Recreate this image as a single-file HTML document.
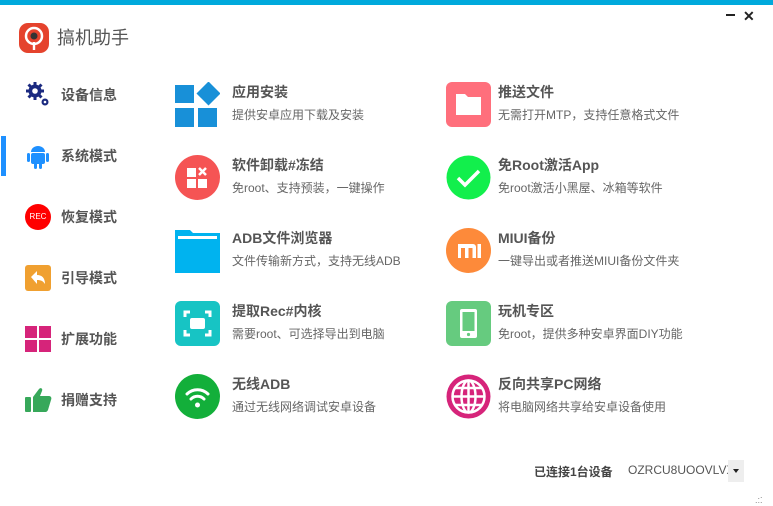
<!DOCTYPE html>
<html><head><meta charset="utf-8"><style>
*{margin:0;padding:0;box-sizing:border-box}
body{width:773px;height:506px;background:#fff;position:relative;overflow:hidden;font-family:"Liberation Sans","Noto Sans CJK SC",sans-serif;color:#555}
.top{position:absolute;left:0;top:0;width:773px;height:5px;background:#00a9dc}
.abs{position:absolute}
.nav{position:absolute;left:61px;font-size:14px;font-weight:bold;color:#555;line-height:20px}
.t{position:absolute;font-size:14px;font-weight:bold;color:#555;line-height:18px;white-space:nowrap}
.d{position:absolute;font-size:12px;color:#666;line-height:16px;white-space:nowrap}
</style></head><body>
<div class="top"></div>
<div class="abs" style="left:726px;top:14px;width:9px;height:2px;background:#222"></div>
<div class="abs" style="left:743px;top:8px;font-size:14px;color:#222;font-weight:bold">✕</div>

<!-- logo -->
<svg class="abs" style="left:19px;top:23px" width="30" height="30" viewBox="0 0 30 30"><rect width="30" height="30" rx="9" fill="#e5432d"/><circle cx="15" cy="13" r="8" fill="none" stroke="#fff" stroke-width="2.5"/><circle cx="15" cy="13" r="3.5" fill="#333"/><rect x="13.8" y="19" width="2.4" height="8" fill="#fff"/></svg>
<div class="abs" style="left:57px;top:27px;font-size:18px;color:#555;line-height:22px">搞机助手</div>

<!-- sidebar -->
<div class="abs" style="left:1px;top:136px;width:5px;height:40px;background:#1e90ff"></div>
<svg class="abs" style="left:25px;top:81px" width="26" height="26" viewBox="0 0 26 26"><circle cx="10" cy="10" r="6.5" fill="#1b2a80"/><g stroke="#1b2a80" stroke-width="3"><line x1="10" y1="1" x2="10" y2="19"/><line x1="1" y1="10" x2="19" y2="10"/><line x1="3.5" y1="3.5" x2="16.5" y2="16.5"/><line x1="16.5" y1="3.5" x2="3.5" y2="16.5"/></g><circle cx="10" cy="10" r="2.8" fill="#fff"/><circle cx="20" cy="21" r="3.5" fill="#1b2a80"/><circle cx="20" cy="21" r="1.3" fill="#fff"/></svg>
<div class="nav" style="top:85px">设备信息</div>
<svg class="abs" style="left:26px;top:143px" width="24" height="26" viewBox="0 0 24 26"><path d="M5 9a7 6 0 0 1 14 0z" fill="#1e90ff"/><rect x="5" y="10" width="14" height="11" rx="2" fill="#1e90ff"/><rect x="1" y="10" width="3" height="9" rx="1.5" fill="#1e90ff"/><rect x="20" y="10" width="3" height="9" rx="1.5" fill="#1e90ff"/><rect x="8" y="20" width="3" height="6" rx="1.5" fill="#1e90ff"/><rect x="13" y="20" width="3" height="6" rx="1.5" fill="#1e90ff"/></svg>
<div class="nav" style="top:146px">系统模式</div>
<div class="abs" style="left:25px;top:204px;width:26px;height:26px;border-radius:50%;background:#f00;color:#fff;font-size:8px;line-height:26px;text-align:center">REC</div>
<div class="nav" style="top:207px">恢复模式</div>
<svg class="abs" style="left:25px;top:265px" width="26" height="26" viewBox="0 0 26 26"><rect width="26" height="26" rx="3" fill="#f0a030"/><path d="M6 12l6-6v4c5 0 8 3 8 9-2-3-4-4-8-4v4z" fill="#fff"/></svg>
<div class="nav" style="top:268px">引导模式</div>
<svg class="abs" style="left:25px;top:326px" width="26" height="26" viewBox="0 0 26 26"><g fill="#d6247a"><rect width="12" height="12"/><rect x="14" width="12" height="12"/><rect y="14" width="12" height="12"/><rect x="14" y="14" width="12" height="12"/></g></svg>
<div class="nav" style="top:329px">扩展功能</div>
<svg class="abs" style="left:25px;top:386px" width="27" height="27" viewBox="0 0 27 27"><rect x="0" y="11" width="6" height="15" rx="1" fill="#37a85a"/><path d="M8 11l6-8c2-2 4 0 3 2l-2 5h9c2 0 3 2 2 4l-3 10c-1 2-2 2-3 2H8z" fill="#37a85a"/></svg>
<div class="nav" style="top:390px">捐赠支持</div>

<!-- left column -->
<svg class="abs" style="left:175px;top:82px" width="45" height="45" viewBox="0 0 45 45"><g fill="#1890d8"><rect x="0" y="3" width="19" height="18"/><rect x="0" y="26" width="19" height="19"/><rect x="23" y="26" width="19" height="19"/><rect x="25" y="3" width="17" height="17" transform="rotate(45 33.5 11.5)"/></g></svg>
<div class="t" style="left:232px;top:83px">应用安装</div><div class="d" style="left:232px;top:107px">提供安卓应用下载及安装</div>

<svg class="abs" style="left:175px;top:155px" width="45" height="45" viewBox="0 0 45 45"><circle cx="22.5" cy="22.5" r="22.5" fill="#f55454"/><g fill="#fff"><rect x="12" y="13" width="9" height="9"/><rect x="12" y="24" width="9" height="9"/><rect x="23" y="24" width="9" height="9"/></g><path d="M24 13l7 7M31 13l-7 7" stroke="#fff" stroke-width="2.5"/></svg>
<div class="t" style="left:232px;top:156px">软件卸载#冻结</div><div class="d" style="left:232px;top:180px">免root、支持预装，一键操作</div>

<svg class="abs" style="left:175px;top:228px" width="45" height="45" viewBox="0 0 45 45"><path d="M0 2h15l3 3h27v40H0z" fill="#00b3ef"/><rect x="3" y="8" width="39" height="3" fill="#fff"/></svg>
<div class="t" style="left:232px;top:229px">ADB文件浏览器</div><div class="d" style="left:232px;top:253px">文件传输新方式，支持无线ADB</div>

<svg class="abs" style="left:175px;top:301px" width="45" height="45" viewBox="0 0 45 45"><rect width="45" height="45" rx="6" fill="#17c4c4"/><g stroke="#fff" stroke-width="3" fill="none"><path d="M10 16v-5h5M30 11h5v5M35 29v5h-5M15 34h-5v-5"/></g><rect x="15" y="17" width="15" height="11" rx="2" fill="#fff"/></svg>
<div class="t" style="left:232px;top:302px">提取Rec#内核</div><div class="d" style="left:232px;top:326px">需要root、可选择导出到电脑</div>

<svg class="abs" style="left:175px;top:374px" width="45" height="45" viewBox="0 0 45 45"><circle cx="22.5" cy="22.5" r="22.5" fill="#13af3a"/><g stroke="#fff" stroke-width="3" fill="none" stroke-linecap="round"><path d="M12 20a15 15 0 0 1 21 0"/><path d="M16 25a9 9 0 0 1 13 0"/></g><circle cx="22.5" cy="31" r="2.5" fill="#fff"/></svg>
<div class="t" style="left:232px;top:375px">无线ADB</div><div class="d" style="left:232px;top:399px">通过无线网络调试安卓设备</div>

<!-- right column -->
<svg class="abs" style="left:446px;top:82px" width="45" height="45" viewBox="0 0 45 45"><rect width="45" height="45" rx="6" fill="#ff6f7c"/><path d="M10 12h9l3 3h13v18H10z" fill="#fff"/></svg>
<div class="t" style="left:498px;top:83px">推送文件</div><div class="d" style="left:498px;top:107px">无需打开MTP，支持任意格式文件</div>

<svg class="abs" style="left:446px;top:155px" width="45" height="45" viewBox="0 0 45 45"><circle cx="22.5" cy="22.5" r="22" fill="#12ef4c"/><path d="M12 23l7 7 14-14" stroke="#fff" stroke-width="3.5" fill="none"/></svg>
<div class="t" style="left:498px;top:156px">免Root激活App</div><div class="d" style="left:498px;top:180px">免root激活小黑屋、冰箱等软件</div>

<svg class="abs" style="left:446px;top:228px" width="45" height="45" viewBox="0 0 45 45"><circle cx="22.5" cy="22.5" r="22.5" fill="#fd8a3a"/><path d="M12 16h15a3 3 0 0 1 3 3v11h-3.5V20h-4v10h-3.5V20h-4v10H12z M31.5 16H35v14h-3.5z" fill="#fff"/></svg>
<div class="t" style="left:498px;top:229px">MIUI备份</div><div class="d" style="left:498px;top:253px">一键导出或者推送MIUI备份文件夹</div>

<svg class="abs" style="left:446px;top:301px" width="45" height="45" viewBox="0 0 45 45"><rect width="45" height="45" rx="6" fill="#66cb7f"/><rect x="14" y="8" width="17" height="29" rx="2" fill="#fff"/><rect x="16.5" y="11" width="12" height="19" fill="#66cb7f"/><circle cx="22.5" cy="33.5" r="1.6" fill="#66cb7f"/></svg>
<div class="t" style="left:498px;top:302px">玩机专区</div><div class="d" style="left:498px;top:326px">免root，提供多种安卓界面DIY功能</div>

<svg class="abs" style="left:446px;top:374px" width="45" height="45" viewBox="0 0 45 45"><circle cx="22.5" cy="22.5" r="22" fill="#d6247a"/><g stroke="#fff" stroke-width="2.5" fill="none"><circle cx="22.5" cy="22.5" r="16"/><ellipse cx="22.5" cy="22.5" rx="7" ry="16"/><line x1="22.5" y1="6" x2="22.5" y2="39"/><line x1="6" y1="22.5" x2="39" y2="22.5"/><path d="M9 14h27M9 31h27"/></g></svg>
<div class="t" style="left:498px;top:375px">反向共享PC网络</div><div class="d" style="left:498px;top:399px">将电脑网络共享给安卓设备使用</div>

<!-- bottom -->
<div class="abs" style="left:534px;top:463px;font-size:12px;font-weight:bold;color:#444">已连接1台设备</div>
<div class="abs" style="left:628px;top:463px;font-size:12px;color:#555;width:100px;overflow:hidden;white-space:nowrap">OZRCU8UOOVLVX</div>
<div class="abs" style="left:728px;top:460px;width:16px;height:22px;background:#eee"></div>
<div class="abs" style="left:733px;top:469px;width:0;height:0;border-left:3px solid transparent;border-right:3px solid transparent;border-top:4px solid #222"></div>
<div class="abs" style="left:755px;top:493px;width:14px;height:10px;font-size:9px;color:#888;line-height:5px">&nbsp;&nbsp;.<br>.:.</div>
</body></html>
